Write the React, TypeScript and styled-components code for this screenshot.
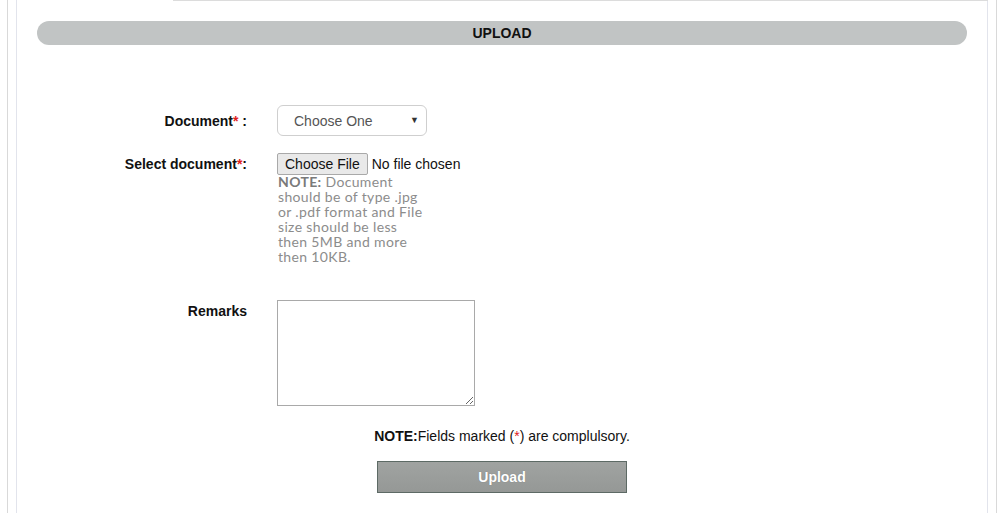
import React from "react";
import styled, { createGlobalStyle } from "styled-components";

const GlobalStyle = createGlobalStyle`
  html, body {
    margin: 0;
    padding: 0;
    background: #fff;
    font-family: "Liberation Sans", Arial, sans-serif;
    color: #111;
  }
`;

const Outer = styled.div`
  width: 990px;
  margin-left: 7px;
  box-sizing: border-box;
  border-left: 1px solid #d9d9d9;
  border-right: 1px solid #d9d9d9;
  padding: 0 8px;
  min-height: 513px;
`;

const Panel = styled.div`
  position: relative;
  border-left: 1px solid #e2e4ec;
  border-right: 1px solid #e2e4ec;
  padding: 21px 20px 40px;
  min-height: 513px;
  box-sizing: border-box;

  /* top edge is open under the active tab */
  &::before {
    content: "";
    position: absolute;
    top: 0;
    left: 156px;
    right: -1px;
    height: 1px;
    background: #dcdcdc;
  }
`;

const SectionBar = styled.div`
  height: 24px;
  border-radius: 12px;
  background: #c1c4c4;
  display: flex;
  align-items: center;
  justify-content: center;
  font-size: 14px;
  font-weight: bold;
  color: #111;
`;

const Form = styled.form`
  margin-top: 60px;
  display: flex;
  flex-direction: column;
`;

const Row = styled.div<{ $align: string; $gap?: number }>`
  display: flex;
  align-items: ${(p) => p.$align};
  gap: 30px;
  margin-top: ${(p) => p.$gap ?? 0}px;
`;

const Label = styled.label<{ $pad?: number }>`
  width: 210px;
  flex: none;
  text-align: right;
  font-size: 14px;
  font-weight: bold;
  color: #111;
  padding-top: ${(p) => p.$pad ?? 0}px;
`;

const Star = styled.span`
  color: #e0201c;
`;

const SelectWrap = styled.div`
  position: relative;
  width: 150px;
  height: 31px;
`;

const Select = styled.select`
  appearance: none;
  width: 150px;
  height: 31px;
  box-sizing: border-box;
  border: 1px solid #cfcfcf;
  border-radius: 6px;
  background: #fff;
  padding: 0 0 0 16px;
  font-family: "Liberation Sans", Arial, sans-serif;
  font-size: 14px;
  color: #555;
  outline: none;
`;

const Caret = styled.span`
  position: absolute;
  right: 8px;
  top: 10px;
  font-size: 9px;
  color: #333;
  pointer-events: none;
`;

const FileCol = styled.div`
  display: flex;
  flex-direction: column;
`;

const FileInput = styled.input`
  font-family: "Liberation Sans", Arial, sans-serif;
  font-size: 14px;
  color: #111;
  height: 22px;

  &::file-selector-button {
    font-family: "Liberation Sans", Arial, sans-serif;
    font-size: 14px;
    height: 22px;
    padding: 0 7px;
    margin-right: 4px;
    border: 1px solid #a9a9a9;
    border-radius: 2px;
    background: #e9e9e9;
    color: #111;
  }
`;

const Hint = styled.p`
  margin: -1px 0 0 1px;
  font-family: "Lato", "Open Sans", sans-serif;
  font-size: 14px;
  line-height: 15px;
  letter-spacing: 0.35px;
  color: #8c8c8c;

  b {
    color: #7a7a7a;
  }
`;

const TextArea = styled.textarea`
  display: block;
  width: 198px;
  height: 106px;
  box-sizing: border-box;
  border: 1px solid #a9a9a9;
  margin: 0;
`;

const Notice = styled.p`
  margin: 22px 0 0;
  text-align: center;
  font-size: 14px;
  line-height: 16px;
  color: #111;
`;

const SubmitButton = styled.button`
  align-self: center;
  margin-top: 17px;
  width: 250px;
  height: 32px;
  border: 1px solid #5d6a65;
  background: linear-gradient(#a0a3a1, #959896);
  color: #fff;
  font-family: "Liberation Sans", Arial, sans-serif;
  font-size: 14px;
  font-weight: bold;
  text-shadow: 0 0 1px rgba(0, 0, 0, 0.25);
`;

export default function App() {
  return (
    <>
      <GlobalStyle />
      <Outer>
        <Panel>
          <SectionBar>UPLOAD</SectionBar>
          <Form onSubmit={(e) => e.preventDefault()}>
            <Row $align="center">
              <Label>
                Document<Star>*</Star> :
              </Label>
              <SelectWrap>
                <Select defaultValue="">
                  <option value="">Choose One</option>
                  <option value="id">ID Proof</option>
                  <option value="addr">Address Proof</option>
                </Select>
                <Caret>▼</Caret>
              </SelectWrap>
            </Row>
            <Row $align="flex-start" $gap={17}>
              <Label $pad={3}>
                Select document<Star>*</Star>:
              </Label>
              <FileCol>
                <FileInput type="file" />
                <Hint>
                  <b>NOTE:</b> Document
                  <br />
                  should be of type .jpg
                  <br />
                  or .pdf format and File
                  <br />
                  size should be less
                  <br />
                  then 5MB and more
                  <br />
                  then 10KB.
                </Hint>
              </FileCol>
            </Row>
            <Row $align="flex-start" $gap={36}>
              <Label $pad={3}>Remarks</Label>
              <TextArea />
            </Row>
            <Notice>
              <b>NOTE:</b>Fields marked (<Star>*</Star>) are complulsory.
            </Notice>
            <SubmitButton type="submit">Upload</SubmitButton>
          </Form>
        </Panel>
      </Outer>
    </>
  );
}
